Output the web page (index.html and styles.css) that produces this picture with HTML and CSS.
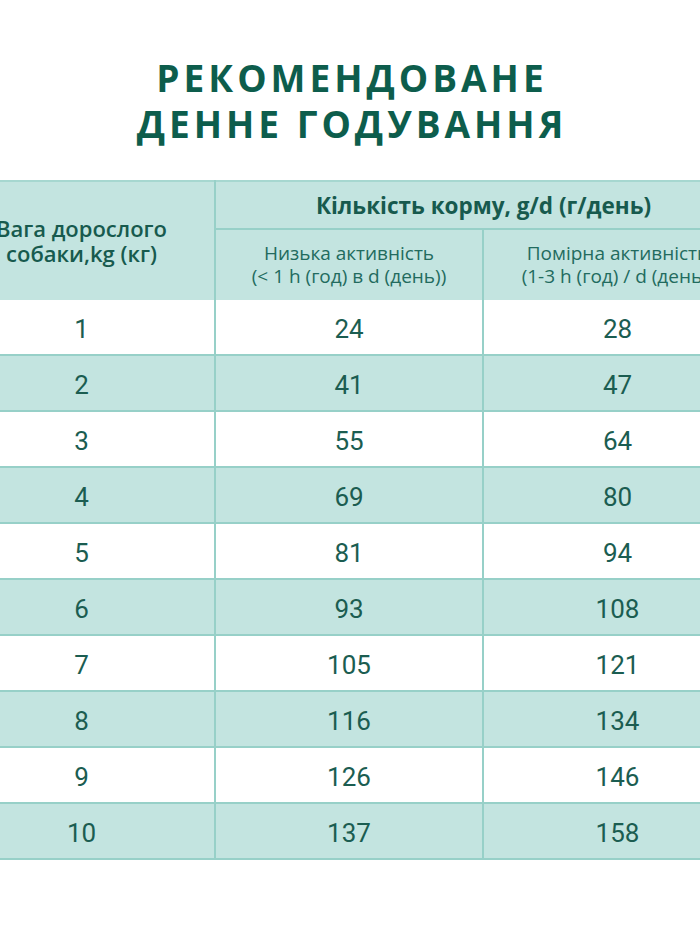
FILE: index.html
```html
<!DOCTYPE html>
<html lang="uk">
<head>
<meta charset="utf-8">
<title>Рекомендоване денне годування</title>
<link rel="stylesheet" href="styles.css">
</head>
<body>
<main class="page">
  <h1 class="title">РЕКОМЕНДОВАНЕ<br>ДЕННЕ ГОДУВАННЯ</h1>
  <div class="table-wrap">
    <table class="feed">
      <colgroup>
        <col class="c1"><col class="c2"><col class="c3">
      </colgroup>
      <thead>
        <tr class="h1row">
          <th class="weight" rowspan="2">Вага дорослого<br>собаки,kg (кг)</th>
          <th class="amount" colspan="2">Кількість корму, g/d (г/день)</th>
        </tr>
        <tr class="h2row">
          <th class="sub">Низька активність<br>(&lt; 1 h (год) в d (день))</th>
          <th class="sub">Помірна активність<br>(1-3 h (год) / d (день))</th>
        </tr>
      </thead>
      <tbody>
        <tr><td>1</td><td>24</td><td>28</td></tr>
        <tr><td>2</td><td>41</td><td>47</td></tr>
        <tr><td>3</td><td>55</td><td>64</td></tr>
        <tr><td>4</td><td>69</td><td>80</td></tr>
        <tr><td>5</td><td>81</td><td>94</td></tr>
        <tr><td>6</td><td>93</td><td>108</td></tr>
        <tr><td>7</td><td>105</td><td>121</td></tr>
        <tr><td>8</td><td>116</td><td>134</td></tr>
        <tr><td>9</td><td>126</td><td>146</td></tr>
        <tr><td>10</td><td>137</td><td>158</td></tr>
      </tbody>
    </table>
  </div>
</main>
</body>
</html>
```
FILE: styles.css
```css
html, body {
  margin: 0;
  padding: 0;
  background: #ffffff;
}

body {
  font-family: "Open Sans", Roboto, "Liberation Sans", sans-serif;
  color: #1b5d51;
}

.page {
  width: 700px;
  height: 935px;
  overflow: hidden;
}

.title {
  margin: 55px 0 0;
  font-family: "Open Sans", Roboto, sans-serif;
  font-size: 37px;
  line-height: 46px;
  font-weight: 700;
  letter-spacing: 4px;
  text-align: center;
  color: #0d5d4c;
  padding-left: 4px;
}

.table-wrap {
  margin-top: 33px;
  width: 700px;
  overflow: hidden;
}

.feed {
  margin-left: -51px;
  width: 802px;
  table-layout: fixed;
  border-collapse: collapse;
  border-spacing: 0;
}

.c1 { width: 266px; }
.c2 { width: 268px; }
.c3 { width: 268px; }

.feed th {
  background: #c3e4e0;
  padding: 0;
  border: 2px solid #97d0c8;
  border-bottom-style: hidden;
}

.feed .h1row th {
  border-top: 2px solid #a6d7d0;
}

.feed .amount {
  height: 46px;
  font-size: 22.5px;
  font-weight: 700;
  color: #175a4e;
  border-bottom: 2px solid #97d0c8;
  border-bottom-style: solid;
}

.feed .weight {
  font-size: 22px;
  font-weight: 600;
  line-height: 25px;
  color: #175a4e;
  border-left-style: hidden;
}

.feed .sub {
  height: 70px;
  font-size: 19px;
  font-weight: 400;
  line-height: 23px;
  color: #226b5e;
}

.feed .sub:last-child,
.feed .amount {
  border-right-style: hidden;
}

.feed td {
  height: 51px;
  padding: 3px 0 0;
  text-align: center;
  font-family: Roboto, "Open Sans", sans-serif;
  font-size: 26px;
  font-weight: 400;
  color: #1b5d51;
  border: 2px solid #97d0c8;
}

.feed td:first-child {
  border-left-style: hidden;
}

.feed td:last-child {
  border-right-style: hidden;
}

.feed tbody tr:first-child td {
  border-top-style: hidden;
}

.feed tbody tr:nth-child(even) td {
  background: #c3e4e0;
}

.feed tbody tr:nth-child(odd) td {
  background: #ffffff;
}
```
